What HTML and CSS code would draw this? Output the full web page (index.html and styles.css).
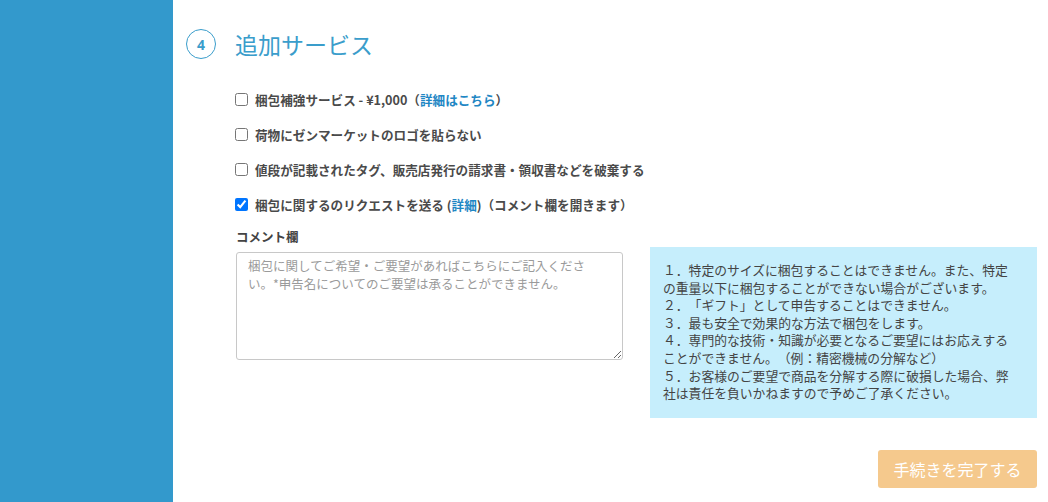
FILE: index.html
```html
<!DOCTYPE html>
<html lang="ja">
<head>
<meta charset="utf-8">
<title>追加サービス</title>
<link rel="stylesheet" href="styles.css">
</head>
<body>
<div class="page">
  <aside class="sidebar"></aside>
  <main class="main">
    <div class="heading">
      <span class="step">4</span>
      <h2 class="title">追加サービス</h2>
    </div>
    <ul class="options">
      <li class="option"><input type="checkbox" class="check"><span>梱包補強サービス - ¥1,000（<a class="link" href="#">詳細はこちら</a>）</span></li>
      <li class="option"><input type="checkbox" class="check"><span>荷物にゼンマーケットのロゴを貼らない</span></li>
      <li class="option"><input type="checkbox" class="check"><span>値段が記載されたタグ、販売店発行の請求書・領収書などを破棄する</span></li>
      <li class="option"><input type="checkbox" class="check" checked><span>梱包に関するのリクエストを送る (<a class="link" href="#">詳細</a>)（コメント欄を開きます）</span></li>
    </ul>
    <div class="comment-row">
      <div class="comment">
        <label class="comment-label">コメント欄</label>
        <textarea class="comment-box" placeholder="梱包に関してご希望・ご要望があればこちらにご記入くださ&#10;い。*申告名についてのご要望は承ることができません。"></textarea>
      </div>
      <div class="notice">
        １．特定のサイズに梱包することはできません。また、特定<br>の重量以下に梱包することができない場合がございます。<br>２．「ギフト」として申告することはできません。<br>３．最も安全で効果的な方法で梱包をします。<br>４．専門的な技術・知識が必要となるご要望にはお応えする<br>ことができません。（例：精密機械の分解など）<br>５．お客様のご要望で商品を分解する際に破損した場合、弊<br>社は責任を負いかねますので予めご了承ください。
      </div>
    </div>
    <div class="actions">
      <button class="submit" type="button">手続きを完了する</button>
    </div>
  </main>
</div>
</body>
</html>
```

FILE: styles.css
```css
html, body {
  margin: 0;
  padding: 0;
  height: 502px;
  overflow: hidden;
  background: #ffffff;
  font-family: "Noto Sans CJK JP", "Noto Sans", sans-serif;
  color: #444444;
  text-spacing-trim: space-all;
}

.page {
  display: flex;
  height: 502px;
}

.sidebar {
  width: 173px;
  flex: none;
  background: #3399cc;
}

.main {
  flex: 1;
  padding: 29px 11px 0 13px;
}

.heading {
  display: flex;
  align-items: center;
  gap: 19px;
  height: 30px;
}

.step {
  width: 28px;
  height: 28px;
  border: 1px solid #3a9dcb;
  border-radius: 50%;
  display: flex;
  align-items: center;
  justify-content: center;
  color: #3a9dcb;
  font-size: 14px;
  font-weight: 700;
  font-family: "Noto Sans", sans-serif;
}

.title {
  margin: 0;
  font-size: 23px;
  font-weight: 400;
  color: #3a9dcb;
  line-height: 30px;
}

.options {
  list-style: none;
  margin: 23px 0 0 49px;
  padding: 0;
}

.option {
  display: flex;
  align-items: center;
  height: 35px;
  gap: 7px;
  font-size: 12.6px;
  font-weight: 700;
  color: #4a4a4a;
}

.check {
  margin: 0;
  width: 13px;
  height: 13px;
  flex: none;
}

.link {
  color: #1f87c4;
  text-decoration: none;
}

.comment-row {
  display: flex;
  align-items: flex-start;
  gap: 27px;
  margin: 6px 0 0 50px;
}

.comment {
  display: flex;
  flex-direction: column;
  gap: 6px;
  width: 387px;
}

.comment-label {
  font-size: 12.5px;
  font-weight: 700;
  line-height: 18px;
  color: #444444;
}

.comment-box {
  box-sizing: border-box;
  width: 387px;
  height: 108px;
  border: 1px solid #c8c8c8;
  border-radius: 3px;
  padding: 4px 11px;
  font-family: "Noto Sans CJK JP", "Noto Sans", sans-serif;
  font-size: 12.5px;
  line-height: 18px;
  resize: vertical;
  color: #444444;
  text-spacing-trim: space-all;
}

.comment-box::placeholder {
  color: #9a9a9a;
}

.notice {
  box-sizing: border-box;
  width: 387px;
  margin-top: 19px;
  padding: 14px 10px 16px 13px;
  background: #c6eefc;
  font-size: 12.8px;
  line-height: 17.6px;
  color: #444444;
  white-space: nowrap;
}

.actions {
  display: flex;
  justify-content: flex-end;
  margin-top: 32px;
}

.submit {
  width: 159px;
  height: 38px;
  border: none;
  border-radius: 3px;
  background: #f5c98d;
  color: #ffffff;
  font-family: "Noto Sans CJK JP", "Noto Sans", sans-serif;
  font-size: 16px;
  padding: 0;
}
```
